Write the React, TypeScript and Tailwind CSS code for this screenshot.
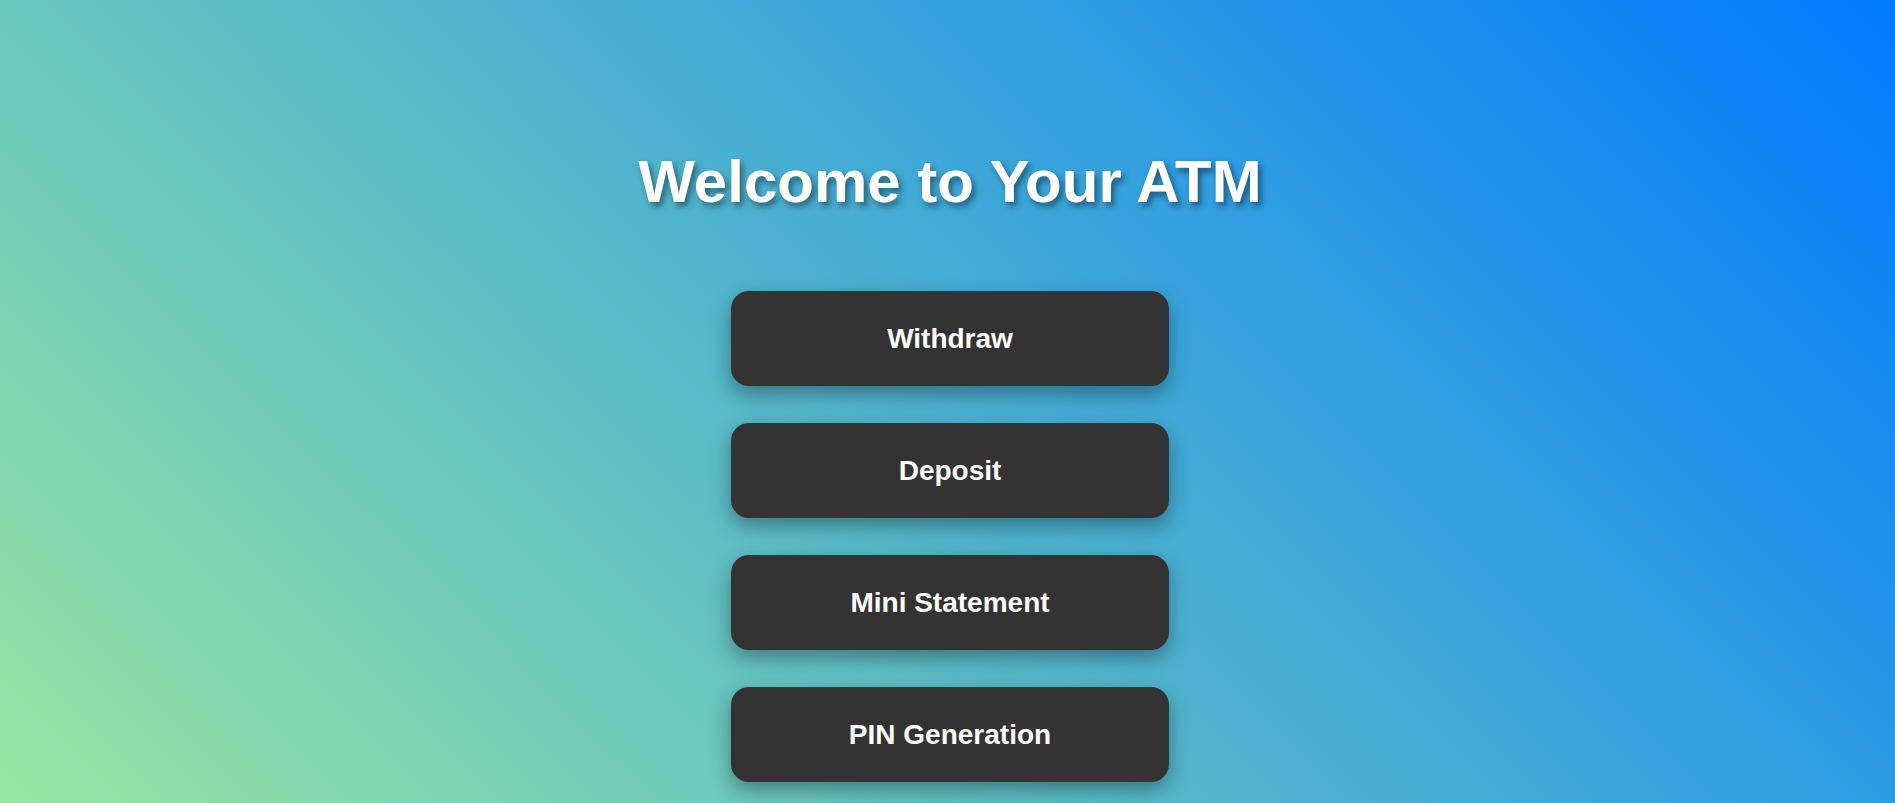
const actions = ["Withdraw", "Deposit", "Mini Statement", "PIN Generation"];

export default function App() {
  return (
    <div className="min-h-screen w-full bg-[linear-gradient(45deg,#96e6a1,#007bff)] font-['Liberation_Sans',Arial,sans-serif]">
      <div className="flex flex-col items-center pl-[5px] pt-[152px]">
        <h1 className="text-[60px] font-bold leading-none text-white [text-shadow:3px_4px_6px_rgba(0,0,0,0.45)]">
          Welcome to Your ATM
        </h1>

        <div className="mt-[79px] flex flex-col gap-[37px]">
          {actions.map((label) => (
            <button
              key={label}
              className="flex h-[95px] w-[438px] items-center justify-center rounded-[18px] bg-[#333333] text-[28px] font-bold text-white shadow-[0_8px_20px_rgba(0,0,0,0.35)]"
            >
              {label}
            </button>
          ))}
        </div>
      </div>
    </div>
  );
}
